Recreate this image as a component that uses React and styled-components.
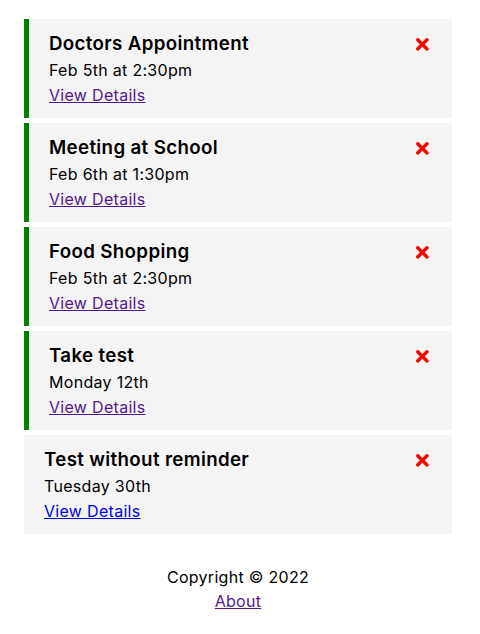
import React from "react";
import styled, { createGlobalStyle } from "styled-components";
import { FaTimes } from "react-icons/fa";

const GlobalStyle = createGlobalStyle`
  * {
    box-sizing: border-box;
    margin: 0;
    padding: 0;
  }
  body {
    font-family: Inter, "Open Sans", sans-serif;
    font-size: 16px;
    letter-spacing: 0.3px;
    color: #000;
    background: #fff;
  }
`;

const Container = styled.div`
  padding: 14px 23px 0 19px;
`;

const TaskCard = styled.div`
  background: #f4f4f4;
  margin: 5px;
  padding: 11px 20px 11px;
  border-left: ${(p) => (p.reminder ? "5px solid green" : "none")};
`;

const Title = styled.h3`
  display: flex;
  align-items: center;
  justify-content: space-between;
  font-size: 18.72px;
  font-weight: 600;
  line-height: 28px;
  letter-spacing: 0.35px;

  svg {
    color: red;
    cursor: pointer;
  }
`;

const Line = styled.p`
  line-height: ${(p) => p.lh || 24}px;
`;

const Link = styled.a`
  color: ${(p) => (p.visited ? "#551a8b" : "#0000ee")};
  text-decoration: underline;
`;

const Footer = styled.footer`
  margin-top: 31px;
  text-align: center;
  line-height: 24px;
`;

const tasks = [
  { id: 1, text: "Doctors Appointment", day: "Feb 5th at 2:30pm", reminder: true },
  { id: 2, text: "Meeting at School", day: "Feb 6th at 1:30pm", reminder: true },
  { id: 3, text: "Food Shopping", day: "Feb 5th at 2:30pm", reminder: true },
  { id: 4, text: "Take test", day: "Monday 12th", reminder: true },
  { id: 5, text: "Test without reminder", day: "Tuesday 30th", reminder: false },
];

const Task = ({ task }) => (
  <TaskCard reminder={task.reminder}>
    <Title>
      {task.text}
      <FaTimes />
    </Title>
    <Line lh={25}>{task.day}</Line>
    <Line>
      <Link href="#" visited={task.reminder}>
        View Details
      </Link>
    </Line>
  </TaskCard>
);

const App = () => {
  return (
    <>
      <GlobalStyle />
      <Container>
        {tasks.map((task) => (
          <Task key={task.id} task={task} />
        ))}
        <Footer>
          <p>Copyright &copy; 2022</p>
          <Link href="#" visited>
            About
          </Link>
        </Footer>
      </Container>
    </>
  );
};

export default App;
